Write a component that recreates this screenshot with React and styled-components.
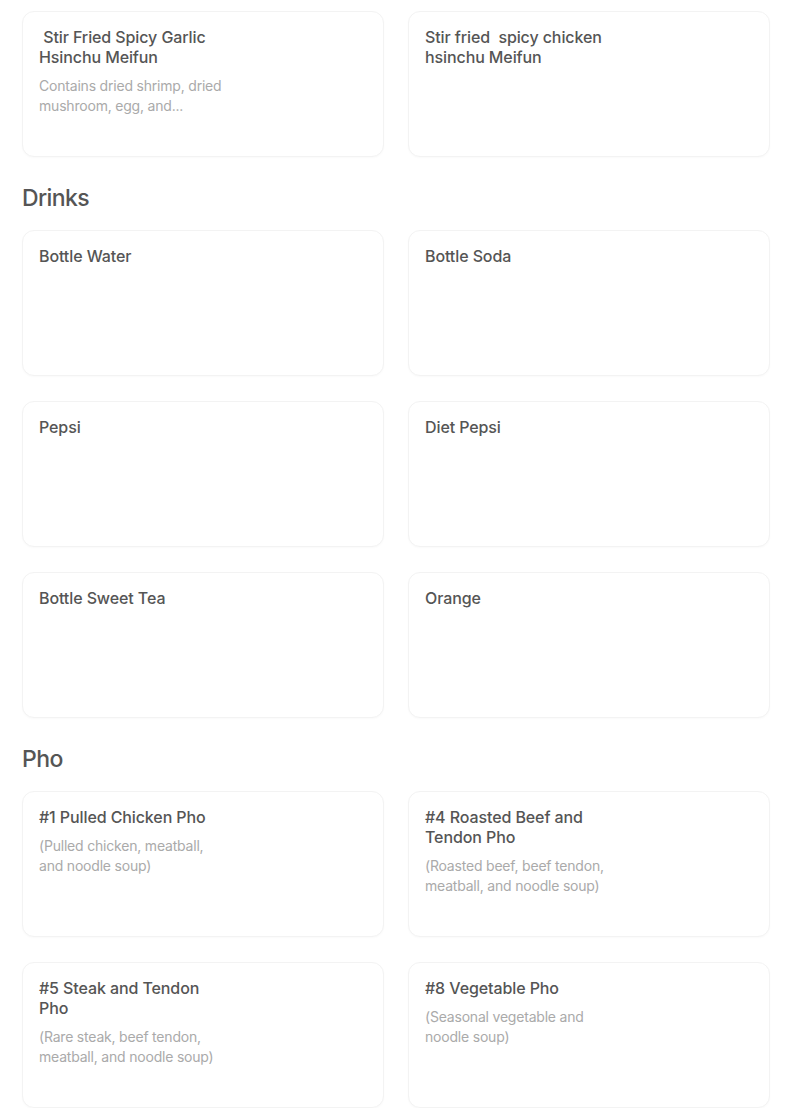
import React from 'react';
import styled, { createGlobalStyle } from 'styled-components';

const GlobalStyle = createGlobalStyle`
  body {
    margin: 0;
    background: #fff;
    font-family: Inter, Roboto, "Liberation Sans", Arial, sans-serif;
  }
`;

const Page = styled.div`
  padding: 11px 34px 0 22px;
  display: flex;
  flex-direction: column;
`;

const Section = styled.section`
  display: flex;
  flex-direction: column;
`;

const Heading = styled.h2`
  margin: 27px 0 18px;
  font-size: 23px;
  line-height: 28px;
  font-weight: 500;
  color: #555;
  letter-spacing: -0.6px;
`;

const Grid = styled.div`
  display: grid;
  grid-template-columns: 1fr 1fr;
  column-gap: 24px;
  row-gap: 25px;
`;

const Card = styled.div`
  height: 146px;
  box-sizing: border-box;
  border: 1px solid #f3f3f3;
  border-radius: 12px;
  box-shadow: 0 1px 2px rgba(0, 0, 0, 0.025);
  padding: 15px 16px;
  background: #fff;
`;

const Info = styled.div`
  max-width: 188px;
`;

const Title = styled.div`
  font-size: 16px;
  line-height: 20px;
  font-weight: 500;
  color: #555;
  letter-spacing: -0.1px;
  white-space: pre-wrap;
`;

const Desc = styled.div`
  margin-top: 9px;
  font-size: 14px;
  line-height: 20px;
  color: #aaa;
  letter-spacing: -0.2px;
`;

const sections = [
  {
    items: [
      { title: ' Stir Fried Spicy Garlic Hsinchu Meifun', desc: 'Contains dried shrimp, dried mushroom, egg, and...' },
      { title: 'Stir fried  spicy chicken hsinchu Meifun' },
    ],
  },
  {
    name: 'Drinks',
    items: [
      { title: 'Bottle Water' },
      { title: 'Bottle Soda' },
      { title: 'Pepsi' },
      { title: 'Diet Pepsi' },
      { title: 'Bottle Sweet Tea' },
      { title: 'Orange' },
    ],
  },
  {
    name: 'Pho',
    items: [
      { title: '#1 Pulled Chicken Pho', desc: '(Pulled chicken, meatball, and noodle soup)' },
      { title: '#4 Roasted Beef and Tendon Pho', desc: '(Roasted beef, beef tendon, meatball, and noodle soup)' },
      { title: '#5 Steak and Tendon Pho', desc: '(Rare steak, beef tendon, meatball, and noodle soup)' },
      { title: '#8 Vegetable Pho', desc: '(Seasonal vegetable and noodle soup)' },
    ],
  },
];

export default function App() {
  return (
    <>
      <GlobalStyle />
      <Page>
        {sections.map((s, i) => (
          <Section key={i}>
            {s.name && <Heading>{s.name}</Heading>}
            <Grid>
              {s.items.map((it) => (
                <Card key={it.title}>
                  <Info>
                    <Title>{it.title}</Title>
                    {it.desc && <Desc>{it.desc}</Desc>}
                  </Info>
                </Card>
              ))}
            </Grid>
          </Section>
        ))}
      </Page>
    </>
  );
}
